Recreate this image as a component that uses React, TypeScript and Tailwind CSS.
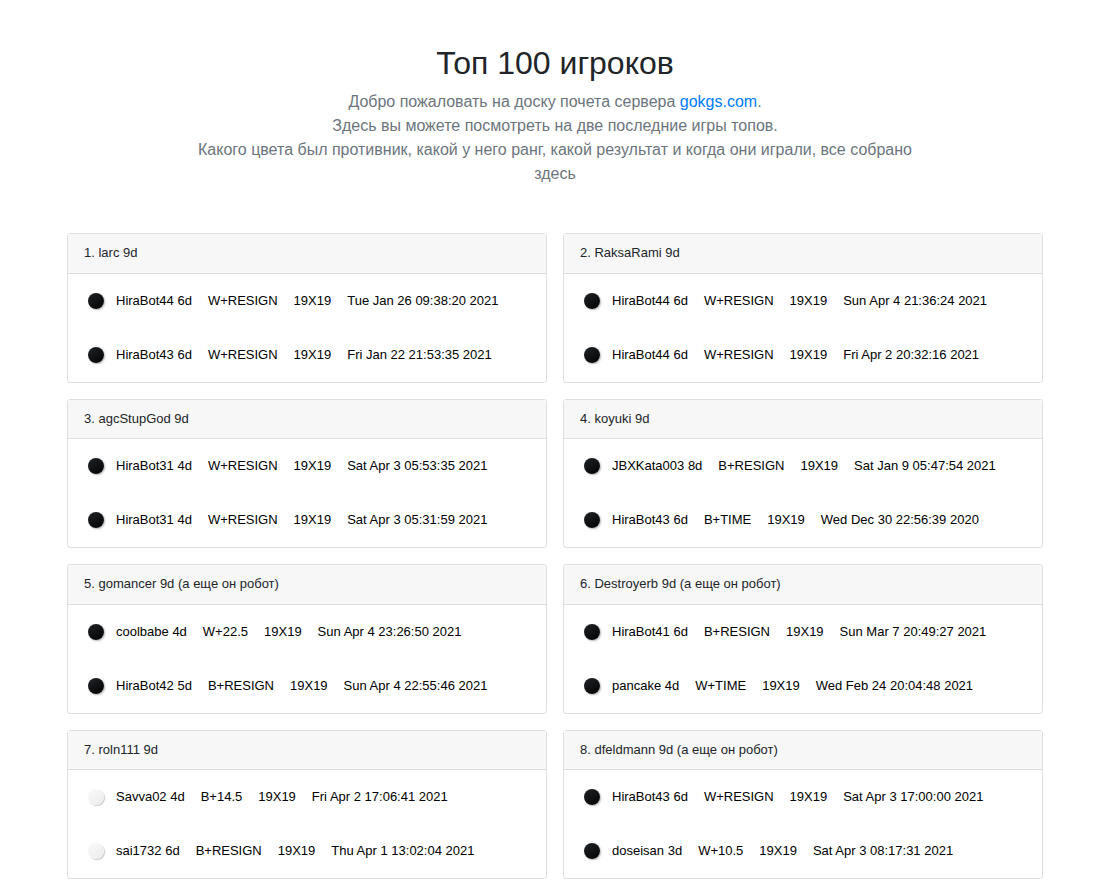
type Game = {
  stone: "black" | "white";
  opponent: string;
  result: string;
  date: string;
};

type Player = { name: string; games: Game[] };

const game = (
  opponent: string,
  result: string,
  date: string,
  stone: Game["stone"] = "black",
): Game => ({ stone, opponent, result, date });

const players: Player[] = [
  {
    name: "larc 9d",
    games: [
      game("HiraBot44 6d", "W+RESIGN", "Tue Jan 26 09:38:20 2021"),
      game("HiraBot43 6d", "W+RESIGN", "Fri Jan 22 21:53:35 2021"),
    ],
  },
  {
    name: "RaksaRami 9d",
    games: [
      game("HiraBot44 6d", "W+RESIGN", "Sun Apr 4 21:36:24 2021"),
      game("HiraBot44 6d", "W+RESIGN", "Fri Apr 2 20:32:16 2021"),
    ],
  },
  {
    name: "agcStupGod 9d",
    games: [
      game("HiraBot31 4d", "W+RESIGN", "Sat Apr 3 05:53:35 2021"),
      game("HiraBot31 4d", "W+RESIGN", "Sat Apr 3 05:31:59 2021"),
    ],
  },
  {
    name: "koyuki 9d",
    games: [
      game("JBXKata003 8d", "B+RESIGN", "Sat Jan 9 05:47:54 2021"),
      game("HiraBot43 6d", "B+TIME", "Wed Dec 30 22:56:39 2020"),
    ],
  },
  {
    name: "gomancer 9d (а еще он робот)",
    games: [
      game("coolbabe 4d", "W+22.5", "Sun Apr 4 23:26:50 2021"),
      game("HiraBot42 5d", "B+RESIGN", "Sun Apr 4 22:55:46 2021"),
    ],
  },
  {
    name: "Destroyerb 9d (а еще он робот)",
    games: [
      game("HiraBot41 6d", "B+RESIGN", "Sun Mar 7 20:49:27 2021"),
      game("pancake 4d", "W+TIME", "Wed Feb 24 20:04:48 2021"),
    ],
  },
  {
    name: "roln111 9d",
    games: [
      game("Savva02 4d", "B+14.5", "Fri Apr 2 17:06:41 2021", "white"),
      game("sai1732 6d", "B+RESIGN", "Thu Apr 1 13:02:04 2021", "white"),
    ],
  },
  {
    name: "dfeldmann 9d (а еще он робот)",
    games: [
      game("HiraBot43 6d", "W+RESIGN", "Sat Apr 3 17:00:00 2021"),
      game("doseisan 3d", "W+10.5", "Sat Apr 3 08:17:31 2021"),
    ],
  },
];

const stoneStyles = {
  black:
    "bg-[linear-gradient(145deg,#212529,#000000)] shadow-[1px_1px_2px_rgba(0,0,0,0.3)]",
  white:
    "bg-[linear-gradient(145deg,#fafafa,#ebebeb)] shadow-[1px_1px_1px_rgba(0,0,0,0.22)]",
};

function GameRow({ stone, opponent, result, date }: Game) {
  return (
    <li className="flex h-[54px] items-center pl-5 text-black">
      <span
        className={`mr-3 size-4 shrink-0 rounded-full ${stoneStyles[stone]}`}
      />
      <div className="flex gap-4 whitespace-nowrap">
        <span>{opponent}</span>
        <span>{result}</span>
        <span>19X19</span>
        <span>{date}</span>
      </div>
    </li>
  );
}

function PlayerCard({ place, player }: { place: number; player: Player }) {
  return (
    <section className="rounded-[3px] border border-[#dfdfdf] bg-white text-[13px] leading-normal">
      <h2 className="border-b border-[#dfdfdf] bg-[#f7f7f7] px-4 pt-[9px] pb-[10px]">
        {place}. {player.name}
      </h2>
      <ul>
        {player.games.map((item) => (
          <GameRow key={item.date} {...item} />
        ))}
      </ul>
    </section>
  );
}

export default function App() {
  return (
    <div className="min-h-screen bg-white pr-4 pb-4 pl-[19px] font-['Liberation_Sans',Arial,sans-serif] text-[#212529]">
      <header className="mx-auto max-w-[730px] pt-11 pb-[47px] text-center">
        <h1 className="mb-2 text-[32px] leading-[38px]">Топ 100 игроков</h1>
        <p className="text-base text-[#6c757d]">
          Добро пожаловать на доску почета сервера{" "}
          <a href="https://gokgs.com" className="text-[#007bff]">
            gokgs.com
          </a>
          .<br />
          Здесь вы можете посмотреть на две последние игры топов.
          <br />
          Какого цвета был противник, какой у него ранг, какой результат и когда
          они играли, все собрано здесь
        </p>
      </header>
      <main className="mx-auto grid max-w-[976px] grid-cols-2 gap-4">
        {players.map((player, index) => (
          <PlayerCard key={player.name} place={index + 1} player={player} />
        ))}
      </main>
    </div>
  );
}
